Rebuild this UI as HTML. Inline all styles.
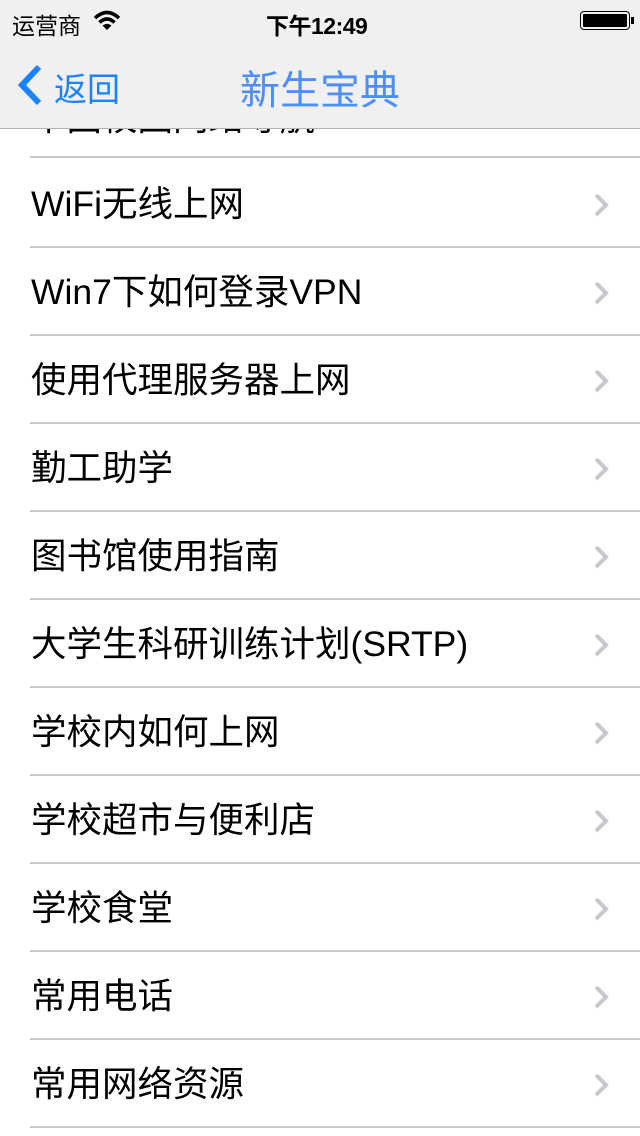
<!DOCTYPE html>
<html><head><meta charset="utf-8"><style>
*{margin:0;padding:0;box-sizing:border-box}
body{width:640px;height:1136px;overflow:hidden;background:#fff;font-family:"Liberation Sans","Noto Sans CJK SC",sans-serif;position:relative}
.nav{position:absolute;left:0;top:0;width:640px;height:129px;background:#f0f0f0;border-bottom:1px solid #b2b2b2;z-index:2}
.sb{position:absolute;top:7px;font-size:23px;color:#000}
.list{position:absolute;top:129px;left:0;width:640px;height:1007px;overflow:hidden}
.row{position:absolute;left:0;width:640px;height:88px}
.row span{position:absolute;left:31px;top:22px;font-size:35.5px;color:#000;white-space:nowrap;line-height:44px}
.row i{position:absolute;left:30px;right:0;bottom:0;height:2px;background:#c8c7cc}
.row svg{position:absolute;left:592px;top:32px}
</style></head><body>
<div class="nav">
<div class="sb" style="left:12px">运营商</div>
<svg style="position:absolute;left:93px;top:10px" width="28" height="22" viewBox="0 0 28 22"><path d="M2 8 Q14 -3 26 8" stroke="#000" stroke-width="3.5" fill="none"/><path d="M6.5 12.5 Q14 5.5 21.5 12.5" stroke="#000" stroke-width="3.5" fill="none"/><path d="M14 20 L9.5 15.5 Q14 12 18.5 15.5 Z" fill="#000"/></svg>
<div class="sb" style="left:266px;font-weight:bold;letter-spacing:-0.5px">下午12:49</div>
<div style="position:absolute;left:580px;top:11px;width:50px;height:19px;border:1.5px solid #000;border-radius:4px;padding:2px"><div style="width:100%;height:100%;background:#000;border-radius:1px"></div></div>
<div style="position:absolute;left:631px;top:17px;width:3px;height:7px;background:#000"></div>
<svg style="position:absolute;left:14px;top:64px" width="30" height="42" viewBox="0 0 30 42"><path d="M25 3 L8 21 L25 39" stroke="#1a82fb" stroke-width="6" fill="none"/></svg>
<div style="position:absolute;left:54px;top:63px;font-size:33px;color:#1a82fb">返回</div>
<div style="position:absolute;left:240px;top:58px;font-size:40px;color:#4d8ff7">新生宝典</div>
</div>
<div class="list">
<div class="row" style="top:-59px"><span style="top:26px">中国校园网络导航</span><i></i></div>
<div class="row" style="top:31px"><span>WiFi无线上网</span><svg width="20" height="26" viewBox="0 0 20 26"><path d="M4 3 L14 13 L4 23" stroke="#c7c7cc" stroke-width="4" fill="none"/></svg><i></i></div>
<div class="row" style="top:119px"><span>Win7下如何登录VPN</span><svg width="20" height="26" viewBox="0 0 20 26"><path d="M4 3 L14 13 L4 23" stroke="#c7c7cc" stroke-width="4" fill="none"/></svg><i></i></div>
<div class="row" style="top:207px"><span>使用代理服务器上网</span><svg width="20" height="26" viewBox="0 0 20 26"><path d="M4 3 L14 13 L4 23" stroke="#c7c7cc" stroke-width="4" fill="none"/></svg><i></i></div>
<div class="row" style="top:295px"><span>勤工助学</span><svg width="20" height="26" viewBox="0 0 20 26"><path d="M4 3 L14 13 L4 23" stroke="#c7c7cc" stroke-width="4" fill="none"/></svg><i></i></div>
<div class="row" style="top:383px"><span>图书馆使用指南</span><svg width="20" height="26" viewBox="0 0 20 26"><path d="M4 3 L14 13 L4 23" stroke="#c7c7cc" stroke-width="4" fill="none"/></svg><i></i></div>
<div class="row" style="top:471px"><span>大学生科研训练计划(SRTP)</span><svg width="20" height="26" viewBox="0 0 20 26"><path d="M4 3 L14 13 L4 23" stroke="#c7c7cc" stroke-width="4" fill="none"/></svg><i></i></div>
<div class="row" style="top:559px"><span>学校内如何上网</span><svg width="20" height="26" viewBox="0 0 20 26"><path d="M4 3 L14 13 L4 23" stroke="#c7c7cc" stroke-width="4" fill="none"/></svg><i></i></div>
<div class="row" style="top:647px"><span>学校超市与便利店</span><svg width="20" height="26" viewBox="0 0 20 26"><path d="M4 3 L14 13 L4 23" stroke="#c7c7cc" stroke-width="4" fill="none"/></svg><i></i></div>
<div class="row" style="top:735px"><span>学校食堂</span><svg width="20" height="26" viewBox="0 0 20 26"><path d="M4 3 L14 13 L4 23" stroke="#c7c7cc" stroke-width="4" fill="none"/></svg><i></i></div>
<div class="row" style="top:823px"><span>常用电话</span><svg width="20" height="26" viewBox="0 0 20 26"><path d="M4 3 L14 13 L4 23" stroke="#c7c7cc" stroke-width="4" fill="none"/></svg><i></i></div>
<div class="row" style="top:911px"><span>常用网络资源</span><svg width="20" height="26" viewBox="0 0 20 26"><path d="M4 3 L14 13 L4 23" stroke="#c7c7cc" stroke-width="4" fill="none"/></svg><i></i></div>
</div>
</body></html>
